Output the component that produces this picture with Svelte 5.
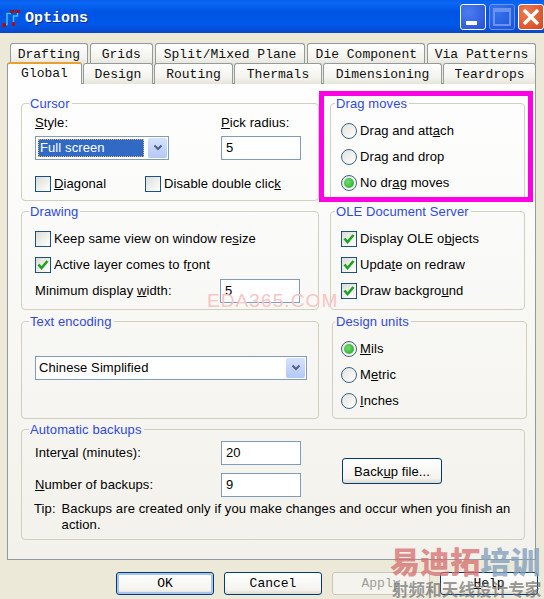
<script>
	const backTabs = [
		{ label: 'Drafting', width: 78 },
		{ label: 'Grids', width: 63 },
		{ label: 'Split/Mixed Plane', width: 151 },
		{ label: 'Die Component', width: 118 },
		{ label: 'Via Patterns', width: 109 }
	];
	const frontTabs = [
		{ label: 'Design', width: 70 },
		{ label: 'Routing', width: 79 },
		{ label: 'Thermals', width: 88 },
		{ label: 'Dimensioning', width: 119 },
		{ label: 'Teardrops', width: 93 }
	];
	const dragMoves = [
		{ text: 'Drag and attach', key: 12 },
		{ text: 'Drag and drop', key: 3 },
		{ text: 'No drag moves', key: 5, on: true }
	];
	const oleOptions = [
		{ text: 'Display OLE objects', key: 13 },
		{ text: 'Update on redraw', key: 4 },
		{ text: 'Draw background', key: 12 }
	];
	const units = [
		{ text: 'Mils', key: 0, on: true },
		{ text: 'Metric', key: 1 },
		{ text: 'Inches', key: 0 }
	];
</script>

{#snippet mn(text, key)}{text.slice(0, key)}<u>{text[key]}</u>{text.slice(key + 1)}{/snippet}

{#snippet check(text, key, on = false)}
	<div class="opt">
		<span class="box">
			{#if on}
				<svg width="14" height="14" viewBox="0 0 14 14"><path d="M2.5 6.5 L5.5 10 L11.5 3" fill="none" stroke="#21a121" stroke-width="2.6" /></svg>
			{/if}
		</span>
		<span>{@render mn(text, key)}</span>
	</div>
{/snippet}

{#snippet radio(text, key, on = false)}
	<div class="opt">
		<span class="circle">{#if on}<span class="dot"></span>{/if}</span>
		<span>{@render mn(text, key)}</span>
	</div>
{/snippet}

{#snippet arrow()}
	<span class="drop">
		<svg width="10" height="8" viewBox="0 0 10 8"><path d="M1.5 1.5 L5 5 L8.5 1.5" fill="none" stroke="#4d6185" stroke-width="2" /></svg>
	</span>
{/snippet}

<div class="window">
	<header class="titlebar">
		<svg class="appicon" width="20" height="18" viewBox="0 0 20 18">
			<path d="M5 15.5 H6 V4.5 H10 M12.5 14 V7 H16.5 V4" fill="none" stroke="#35c8f0" stroke-width="1.5" />
			<path d="M1 14h4v4H1z M9 1h4v3H9z M14 1h5v3h-5z M11 13h3v4h-3z" fill="#a81018" />
		</svg>
		<span class="title">Options</span>
		<div class="controls">
			<span class="ctl minimize"><i></i></span>
			<span class="ctl maximize"><i></i></span>
			<span class="ctl close">
				<svg width="20" height="20" viewBox="0 0 20 20"><path d="M3 3 L17 17 M17 3 L3 17" stroke="#fff" stroke-width="3.4" /></svg>
			</span>
		</div>
	</header>

	<div class="content">
		<div class="tabrow back">
			{#each backTabs as t}
				<div class="tab" style="width: {t.width}px">{t.label}</div>
			{/each}
		</div>
		<div class="tabrow front">
			<div class="tab active">Global</div>
			{#each frontTabs as t}
				<div class="tab" style="width: {t.width}px">{t.label}</div>
			{/each}
		</div>

		<main class="panel">
			<fieldset class="cursor">
				<legend>Cursor</legend>
				<div class="cursor-top">
					<div>
						<div class="lbl">{@render mn('Style:', 0)}</div>
						<div class="combo style-combo">
							<span class="selected">Full screen</span>
							{@render arrow()}
						</div>
					</div>
					<div>
						<div class="lbl">{@render mn('Pick radius:', 0)}</div>
						<div class="input">5</div>
					</div>
				</div>
				<div class="cursor-checks">
					{@render check('Diagonal', 0)}
					{@render check('Disable double click', 19)}
				</div>
			</fieldset>

			<fieldset class="right">
				<legend>Drag moves</legend>
				<div class="opts">
					{#each dragMoves as o}{@render radio(o.text, o.key, o.on)}{/each}
				</div>
			</fieldset>

			<fieldset class="row2 drawing">
				<legend>Drawing</legend>
				<div class="opts">
					{@render check('Keep same view on window resize', 27)}
					{@render check('Active layer comes to front', 23, true)}
					<div class="field">
						<span>{@render mn('Minimum display width:', 16)}</span>
						<div class="input">5</div>
					</div>
				</div>
			</fieldset>

			<fieldset class="row2 right">
				<legend>OLE Document Server</legend>
				<div class="opts">
					{#each oleOptions as o}{@render check(o.text, o.key, true)}{/each}
				</div>
			</fieldset>

			<fieldset class="encoding">
				<legend>Text encoding</legend>
				<div class="combo wide-combo">
					<span class="plain">Chinese Simplified</span>
					{@render arrow()}
				</div>
			</fieldset>

			<fieldset class="right units">
				<legend>Design units</legend>
				<div class="opts">
					{#each units as o}{@render radio(o.text, o.key, o.on)}{/each}
				</div>
			</fieldset>

			<fieldset class="backups">
				<legend>Automatic backups</legend>
				<div class="backup-top">
					<div class="backup-fields">
						<div class="field">
							<span>{@render mn('Interval (minutes):', 5)}</span>
							<div class="input">20</div>
						</div>
						<div class="field">
							<span>{@render mn('Number of backups:', 0)}</span>
							<div class="input">9</div>
						</div>
					</div>
					<button class="btn backup">{@render mn('Backup file...', 4)}</button>
				</div>
				<div class="tip">
					<span class="tip-head">Tip:</span>
					<span>Backups are created only if you make changes and occur when you finish an action.</span>
				</div>
			</fieldset>
		</main>

		<footer class="actions">
			<button class="btn mono default">OK</button>
			<button class="btn mono">Cancel</button>
			<button class="btn mono disabled">Apply</button>
			<button class="btn mono"><u>H</u>elp</button>
		</footer>
	</div>

	<div class="highlight"></div>
	<div class="wm-site">EDA365.COM</div>
	<div class="wm-brand"><span class="red">易迪拓</span><span class="blue">培训</span></div>
	<div class="wm-slogan">射频和天线设计专家</div>
</div>

<style>
	:global(body) {
		margin: 0;
	}
	.window {
		position: relative;
		width: 544px;
		height: 599px;
		overflow: hidden;
		background: #ece9d8;
		color: #000;
		font: 13px/16px 'Liberation Sans', Arial, sans-serif;
		letter-spacing: 0.1px;
	}
	.titlebar {
		height: 33px;
		box-sizing: border-box;
		display: flex;
		align-items: center;
		padding-top: 3px;
		background: linear-gradient(#0a5fec 0%, #0a68f4 10%, #0054e3 35%, #0058ea 75%, #0847c8 100%);
	}
	.appicon {
		margin: 0 4px 0 1px;
	}
	.title {
		color: #fff;
		font: bold 15px 'Liberation Mono', monospace;
		letter-spacing: 0;
		text-shadow: 1px 1px 0 #0a2a8a;
	}
	.controls {
		margin: -3px 0 0 auto;
		display: flex;
		gap: 3px;
	}
	.ctl {
		width: 26px;
		height: 26px;
		box-sizing: border-box;
		border: 1px solid #fff;
		border-radius: 3px;
		display: flex;
		align-items: center;
		justify-content: center;
		background: radial-gradient(circle at 30% 30%, #4a7df0, #2550d8);
	}
	.minimize {
		align-items: flex-end;
		justify-content: flex-start;
	}
	.minimize i {
		width: 11px;
		height: 4px;
		margin: 0 0 4px 5px;
		background: #fff;
	}
	.maximize {
		opacity: 0.75;
		border-color: #8fa8ee;
	}
	.maximize i {
		width: 14px;
		height: 12px;
		border: 2px solid #8fa8ee;
		border-top-width: 4px;
	}
	.close {
		background: radial-gradient(circle at 30% 30%, #ec7a50, #d8451c);
	}
	.content {
		padding: 10px 8px 0 7px;
	}
	.tabrow {
		display: flex;
		font: 13px/21px 'Liberation Mono', monospace;
		letter-spacing: 0;
		color: #111;
	}
	.back {
		padding-left: 3px;
		gap: 2px;
		height: 20px;
	}
	.front {
		position: relative;
		z-index: 1;
		gap: 1px;
		height: 21px;
	}
	.tab {
		box-sizing: border-box;
		height: 21px;
		text-align: center;
		border: 1px solid #919b9c;
		border-bottom: 0;
		border-radius: 3px 3px 0 0;
		background: linear-gradient(#fff, #f3f2ec 70%, #e6e4da);
	}
	.active {
		width: 75px;
		height: 22px;
		margin-top: -1px;
		border-top: 2px solid #e8a030;
		background: #fefefe;
		line-height: 19px;
	}
	.panel {
		box-sizing: border-box;
		height: 477px;
		margin-top: -1px;
		padding: 12px 10px 0 13px;
		border: 1px solid #919b9c;
		background: linear-gradient(#fefefe, #f2f1eb);
		display: grid;
		grid-template-columns: 298px 195px;
		grid-template-rows: 105px 107px 105px 118px;
		column-gap: 11px;
		row-gap: 3px;
	}
	fieldset {
		margin: 0;
		padding: 0 13px;
		min-width: 0;
		border: 1px solid #d0d0bf;
		border-radius: 4px;
	}
	legend {
		padding: 0 2px 0 1px;
		margin-left: -6px;
		font-size: 13px;
		line-height: 15px;
		color: #2f49e0;
	}
	.row2 {
		margin-bottom: 1px;
	}
	.right {
		padding-left: 10px;
	}
	.units {
		margin: 0 -2px 0 2px;
		padding-left: 8px;
	}
	.backups {
		grid-column: 1 / -1;
	}
	.cursor-top {
		display: flex;
		gap: 52px;
		padding-top: 4px;
	}
	.lbl {
		margin-bottom: 5px;
	}
	.combo {
		box-sizing: border-box;
		height: 24px;
		border: 1px solid #7f9db9;
		background: #fff;
		display: flex;
		align-items: center;
		justify-content: space-between;
		padding: 1px 1px 1px 2px;
	}
	.style-combo {
		width: 134px;
	}
	.wide-combo {
		width: 272px;
		margin-top: 27px;
	}
	.selected {
		width: 106px;
		height: 18px;
		box-sizing: border-box;
		background: #316ac5;
		color: #fff;
		border: 1px dotted #f0b040;
		padding-left: 1px;
	}
	.plain {
		padding-left: 1px;
	}
	.drop {
		width: 19px;
		height: 20px;
		border-radius: 2px;
		background: linear-gradient(#d6e2fc, #b4c8f6);
		display: flex;
		align-items: center;
		justify-content: center;
	}
	.input {
		box-sizing: border-box;
		width: 80px;
		height: 24px;
		border: 1px solid #7f9db9;
		background: #fff;
		padding: 3px 4px;
	}
	.cursor-checks {
		display: flex;
		padding-top: 16px;
	}
	.cursor-checks .opt:first-child {
		width: 110px;
	}
	.opts {
		padding-top: 7px;
	}
	.opt,
	.field {
		height: 26px;
		display: flex;
		align-items: center;
		gap: 3px;
	}
	.cursor-checks .opt {
		height: 16px;
	}
	.box {
		box-sizing: border-box;
		width: 16px;
		height: 16px;
		border: 1px solid #1c5180;
		background: linear-gradient(135deg, #dcdcd7, #fff);
		display: flex;
		align-items: center;
		justify-content: center;
	}
	.circle {
		box-sizing: border-box;
		width: 16px;
		height: 16px;
		border: 1px solid #3b6488;
		border-radius: 50%;
		background: linear-gradient(135deg, #e2e2dc, #fff);
		display: flex;
		align-items: center;
		justify-content: center;
	}
	.dot {
		width: 10px;
		height: 10px;
		border-radius: 50%;
		background: radial-gradient(circle at 40% 40%, #6fe06f, #21a121);
	}
	.field {
		justify-content: space-between;
	}
	.drawing .field {
		padding-right: 5px;
	}
	.backup-top {
		display: flex;
		align-items: center;
		gap: 41px;
		padding-top: 4px;
	}
	.backup-fields {
		width: 266px;
		flex: none;
	}
	.backup-fields .field {
		height: 24px;
		margin-bottom: 8px;
	}
	.tip {
		display: flex;
		gap: 6px;
		margin: -4px -8px 0 -1px;
	}
	.tip-head {
		flex: none;
	}
	.btn {
		box-sizing: border-box;
		padding: 0;
		border: 1px solid #003c74;
		border-radius: 3px;
		background: linear-gradient(#fff, #f4f3ee 80%, #dcd8ce);
		font: 13px 'Liberation Sans', Arial, sans-serif;
		letter-spacing: 0.1px;
		color: #000;
	}
	.backup {
		flex: none;
		width: 100px;
		height: 26px;
		margin-bottom: 4px;
	}
	.actions {
		display: flex;
		justify-content: flex-end;
		gap: 10px;
		margin: 12px -2px 0 0;
	}
	.mono {
		width: 98px;
		height: 23px;
		font: 13px 'Liberation Mono', monospace;
		letter-spacing: 0;
	}
	.default {
		box-shadow: inset 0 0 0 2px #a8c4ee;
	}
	.disabled {
		border-color: #c9c7ba;
		background: #f4f3ee;
		color: #a19f94;
	}
	/* annotation and watermarks painted over the screenshot */
	.highlight {
		position: absolute;
		left: 319px;
		top: 91px;
		width: 214px;
		height: 111px;
		box-sizing: border-box;
		border: 5px solid #ff00e6;
	}
	.wm-site {
		position: absolute;
		left: 207px;
		top: 290px;
		font-size: 19px;
		line-height: 22px;
		letter-spacing: 1.1px;
		color: #f8c4c4;
	}
	.wm-brand {
		position: absolute;
		left: 390px;
		top: 543px;
		font: 900 30px/34px 'Noto Sans CJK SC', sans-serif;
		white-space: nowrap;
	}
	.red {
		color: rgba(215, 110, 110, 0.75);
	}
	.blue {
		color: rgba(130, 160, 190, 0.8);
	}
	.wm-slogan {
		position: absolute;
		left: 392px;
		top: 580px;
		font: bold 16.5px/19px 'Noto Sans CJK SC', sans-serif;
		white-space: nowrap;
		color: rgba(110, 110, 110, 0.7);
	}
</style>
